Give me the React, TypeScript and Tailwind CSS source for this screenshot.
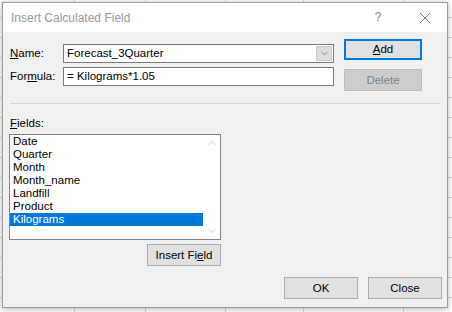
import { ChevronDown, ChevronUp } from 'lucide-react';

const fields = ['Date', 'Quarter', 'Month', 'Month_name', 'Landfill', 'Product', 'Kilograms'];

function Btn({ children, cls }: { children: React.ReactNode; cls?: string }) {
  // default look of a classic win32 push button
  return (
    <button className={`flex items-center justify-center ${cls ?? 'w-[74px] h-[22px] bg-[#e1e1e1] border border-[#adadad] text-black'}`}>
      {children}
    </button>
  );
}

export default function App() {
  return (
    <div className="relative w-[452px] h-[312px] overflow-hidden bg-white font-['Liberation_Sans',sans-serif] text-[11.5px] leading-[13px]">
      {/* spreadsheet behind the dialog */}
      <div className="flex h-full bg-[linear-gradient(to_bottom,transparent_19px,#d6d6d6_19px)] bg-[length:100%_20px] bg-[position:0_-2px]">
        <div className="w-[75px] border-r border-[#d6d6d6]" />
        <div className="w-[71px] border-r border-[#d6d6d6]" />
        <div className="w-[80px] border-r border-[#d6d6d6]" />
        <div className="w-[78px] border-r border-[#d6d6d6]" />
        <div className="w-[100px] border-r border-[#d6d6d6]" />
        <div className="flex-1" />
      </div>

      {/* dialog */}
      <div className="absolute left-[2px] top-[2px] w-[446px] h-[306px] border border-[#9b9b9b] shadow-[0_1px_6px_rgba(0,0,0,0.3)] flex flex-col">
        <div className="h-[29px] bg-white flex items-center pl-[8px] text-[#9a9a9a] text-[12px]">
          <span className="flex-1 pt-[1px]">Insert Calculated Field</span>
          <span className="w-[12px] text-center text-[#8a8a8a] mr-[35px]">?</span>
          <svg width="12" height="12" viewBox="0 0 12 12" className="mr-[16px]">
            <path d="M1 1 L11 11 M11 1 L1 11" stroke="#7a7a7a" strokeWidth="1" fill="none" />
          </svg>
        </div>

        <div className="flex-1 bg-[#f0f0f0] flex flex-col text-black">
          {/* name / formula + buttons */}
          <div className="h-[71px] flex pl-[7px]">
            <div className="flex flex-col gap-[4px] pt-[12px]">
              <div className="flex items-center">
                <span className="w-[53px]"><u>N</u>ame:</span>
                <div className="w-[271px] h-[19px] bg-white border border-[#7a7a7a] flex items-center">
                  <span className="flex-1 pl-[3px]">Forecast_3Quarter</span>
                  <div className="w-[16px] h-[15px] mr-[1px] bg-[#dcdcdc] border border-[#c8c8c8] flex items-center justify-center">
                    <ChevronDown size={11} strokeWidth={1.3} color="#555555" />
                  </div>
                </div>
              </div>
              <div className="flex items-center">
                <span className="w-[53px]">For<u>m</u>ula:</span>
                <div className="w-[271px] h-[19px] bg-white border border-[#7a7a7a] flex items-center pl-[3px]">
                  = Kilograms*1.05
                </div>
              </div>
            </div>
            <div className="flex flex-col gap-[9px] pt-[7px] ml-[10px]">
              <Btn cls="w-[78px] h-[21px] bg-[#e1e1e1] border-2 border-[#0078d7] text-black">
                <span><u>A</u>dd</span>
              </Btn>
              <Btn cls="w-[78px] h-[22px] bg-[#cccccc] border border-[#bfbfbf] text-[#838383]">
                Delete
              </Btn>
            </div>
          </div>

          <div className="ml-[7px] w-[431px] border-t border-[#d7d7d7]" />

          {/* fields */}
          <div className="pl-[7px] mt-[13px]">
            <u>F</u>ields:
          </div>
          <div className="ml-[6px] mt-[4px] w-[212px] flex flex-col">
            <div className="h-[106px] bg-white border border-[#828282] flex">
              <div className="flex-1 flex flex-col">
                {fields.map((f) => (
                  <div
                    key={f}
                    className={`h-[13px] pl-[3px] ${f === 'Kilograms' ? 'bg-[#0078d7] text-white' : ''}`}
                  >
                    {f}
                  </div>
                ))}
              </div>
              <div className="w-[17px] flex flex-col justify-between items-center py-[2px]">
                <ChevronUp size={12} strokeWidth={1.4} color="#c0c0c0" />
                <ChevronDown size={12} strokeWidth={1.4} color="#c0c0c0" />
              </div>
            </div>
            <div className="self-end mt-[4px]">
              <Btn>
                <span>Insert Fi<u>e</u>ld</span>
              </Btn>
            </div>
          </div>

          {/* bottom buttons */}
          <div className="flex justify-end gap-[10px] pr-[5px] mt-[11px]">
            <Btn>OK</Btn>
            <Btn>Close</Btn>
          </div>
        </div>
      </div>
    </div>
  );
}
